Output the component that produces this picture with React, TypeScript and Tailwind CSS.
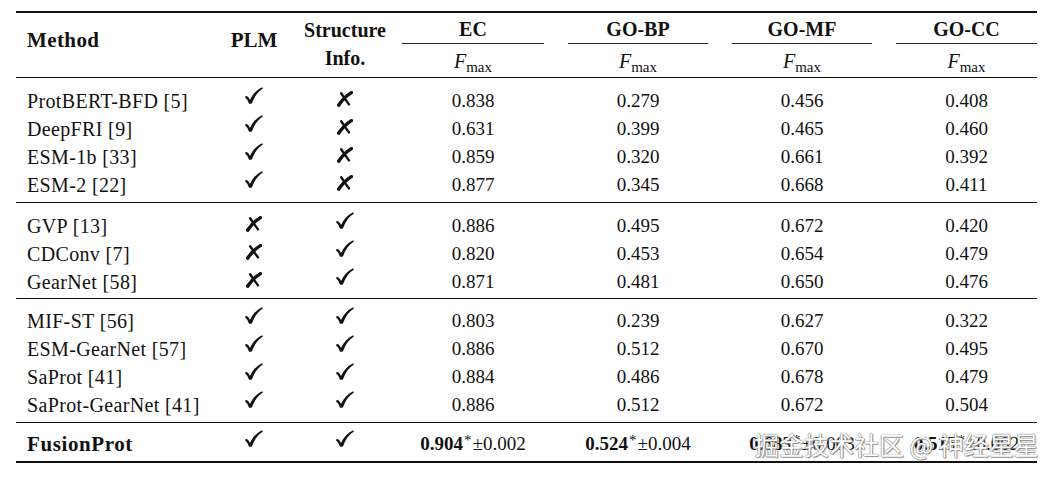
import React from "react";

type Row = { name: string; plm: boolean; struct: boolean; vals: string[] };

const sections: Row[][] = [
  [
    { name: "ProtBERT-BFD [5]", plm: true, struct: false, vals: ["0.838", "0.279", "0.456", "0.408"] },
    { name: "DeepFRI [9]", plm: true, struct: false, vals: ["0.631", "0.399", "0.465", "0.460"] },
    { name: "ESM-1b [33]", plm: true, struct: false, vals: ["0.859", "0.320", "0.661", "0.392"] },
    { name: "ESM-2 [22]", plm: true, struct: false, vals: ["0.877", "0.345", "0.668", "0.411"] },
  ],
  [
    { name: "GVP [13]", plm: false, struct: true, vals: ["0.886", "0.495", "0.672", "0.420"] },
    { name: "CDConv [7]", plm: false, struct: true, vals: ["0.820", "0.453", "0.654", "0.479"] },
    { name: "GearNet [58]", plm: false, struct: true, vals: ["0.871", "0.481", "0.650", "0.476"] },
  ],
  [
    { name: "MIF-ST [56]", plm: true, struct: true, vals: ["0.803", "0.239", "0.627", "0.322"] },
    { name: "ESM-GearNet [57]", plm: true, struct: true, vals: ["0.886", "0.512", "0.670", "0.495"] },
    { name: "SaProt [41]", plm: true, struct: true, vals: ["0.884", "0.486", "0.678", "0.479"] },
    { name: "SaProt-GearNet [41]", plm: true, struct: true, vals: ["0.886", "0.512", "0.672", "0.504"] },
  ],
];

const sectionPad = ["pt-[9px] pb-[3px]", "pt-[9px] pb-[2px]", "pt-[8px] pb-[3px]"];

const fusion = [
  ["0.904", "0.002"],
  ["0.524", "0.004"],
  ["0.683", "0.003"],
  ["0.515", "0.002"],
];

const grid = "grid grid-cols-[192px_92px_90px_166px_164px_164px_153px]";
const numCell = ["", "", "", "px-[12px]", "px-[12px]", "px-[12px]", "pl-[12px]"];

function Check() {
  return (
    <svg width="18" height="17" viewBox="0 0 18 17" className="mb-[12px]">
      <path
        d="M0.4 9.2 C2 8.5 3.6 10.3 5 12.9 C7.6 7.3 11.6 2.7 17.2 0.2 L17.9 1.5 C12.8 4.7 9.3 9.7 7 16.3 C6.3 16.9 4.6 17 3.9 16.5 C3.1 13.8 1.9 11.7 0.2 10.7 Z"
        fill="#111"
      />
    </svg>
  );
}

function Cross() {
  return (
    <svg width="16" height="16" viewBox="0 0 16 16" className="mb-[4px]">
      <path d="M4.2 2.2 C6.4 5.4 9.2 9.6 12 13.4" stroke="#111" strokeWidth="2.4" strokeLinecap="round" fill="none" />
      <path d="M14.4 1.6 C9.8 4.4 5.4 8.6 1.6 14.2" stroke="#111" strokeWidth="3.4" strokeLinecap="round" fill="none" />
    </svg>
  );
}

function Mark({ ok }: { ok: boolean }) {
  return <div className="flex h-[28px] items-center justify-center">{ok ? <Check /> : <Cross />}</div>;
}

function Fmax() {
  return (
    <div className="text-center text-[20px] leading-[28px]">
      <span className="italic">F</span>
      <span className="relative top-[4px] text-[15px]">max</span>
    </div>
  );
}

export default function App() {
  const heads = ["EC", "GO-BP", "GO-MF", "GO-CC"];
  return (
    <div className="h-[478px] w-[1056px] bg-white font-['Liberation_Serif',serif] text-[#111]">
      <div className="relative ml-[16px] w-[1021px] pt-[11px]">
        <div className="h-[2px] bg-[#111]" />

        {/* header */}
        <div className={`${grid} h-[64px] font-bold text-[20px] leading-[28px]`}>
          <div className="pl-[11px] pt-[13px] text-[21px] tracking-[0.4px]">Method</div>
          <div className="pt-[13px] text-center text-[21px]">PLM</div>
          <div className="pt-[3px] text-center">
            Structure
            <br />
            Info.
          </div>
          {heads.map((h, i) => (
            <div key={h} className={`${numCell[i + 3]} pt-[2px]`}>
              <div className="text-center">{h}</div>
              <div className="h-px bg-[#222]" />
              <div className="pt-[3px] font-normal">
                <Fmax />
              </div>
            </div>
          ))}
        </div>
        <div className="h-px bg-[#111]" />

        {sections.map((rows, si) => (
          <div key={si}>
            <div className={sectionPad[si]}>
              {rows.map((r) => (
                <div key={r.name} className={`${grid} h-[28px] leading-[28px]`}>
                  <div className="whitespace-nowrap pl-[11px] text-[20px] tracking-[0.35px]">{r.name}</div>
                  <Mark ok={r.plm} />
                  <Mark ok={r.struct} />
                  {r.vals.map((v, i) => (
                    <div key={i} className={`${numCell[i + 3]} text-center text-[19px]`}>
                      {v}
                    </div>
                  ))}
                </div>
              ))}
            </div>
            <div className="h-px bg-[#111]" />
          </div>
        ))}

        {/* FusionProt */}
        <div className="pt-[7px] pb-[3px]">
          <div className={`${grid} h-[28px] leading-[28px]`}>
            <div className="pl-[11px] text-[21px] font-bold tracking-[0.6px]">FusionProt</div>
            <Mark ok />
            <Mark ok />
            {fusion.map(([m, s], i) => (
              <div key={i} className={`${numCell[i + 3]} whitespace-nowrap text-center text-[19px]`}>
                <span className="font-bold">{m}</span>
                <span className="relative -top-[5px] px-[1px] text-[15px]">*</span>
                <span>±{s}</span>
              </div>
            ))}
          </div>
        </div>
        <div className="h-[2px] bg-[#111]" />

        {/* watermark */}
        <div className="absolute left-[738px] top-[428px] whitespace-nowrap font-['Noto_Sans_CJK_SC',sans-serif] text-[25px] leading-[32px] text-white [text-shadow:0_0_1px_#666,0_0_1px_#666,1px_1px_1px_#999]">
          掘金技术社区 @ 神经星星
        </div>
      </div>
    </div>
  );
}
